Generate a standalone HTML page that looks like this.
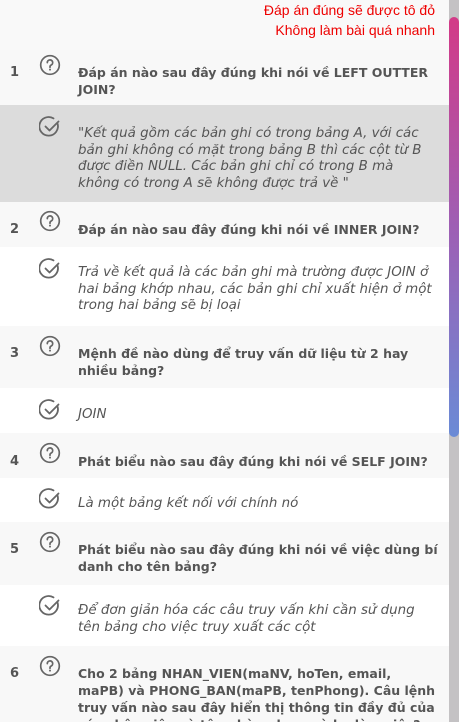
<!DOCTYPE html>
<html style="overflow:hidden"><head><meta charset="utf-8"><style>
*{margin:0;padding:0;box-sizing:border-box}
html,body{width:459px;height:722px;overflow:hidden}
body{background:#f9f9f9;font-family:"DejaVu Sans","Liberation Sans",sans-serif;color:#555;position:relative}
.r{position:absolute;left:0;width:449px}
.q{background:#f8f8f8}
.a{background:#fff}
.t{position:absolute;left:78px;width:362px;font-size:13px;line-height:17px}
.qt{font-weight:bold;font-size:12.5px}
.at{font-style:italic;color:#555;font-size:13.4px;line-height:16.5px;width:355px}
.n{position:absolute;left:10px;font-size:13px;font-weight:bold;line-height:17px}
svg{position:absolute;left:39px}
.red{position:absolute;right:24px;color:#e00;font-size:14px;text-align:right;line-height:20px;font-family:"Liberation Sans",sans-serif}
.sb{position:absolute;left:449px;top:0;width:10px;height:722px;background:#c4c2c4}
.th{position:absolute;left:449px;top:17px;width:10px;height:420px;border-radius:5px;background:linear-gradient(#d33a87,#9e5fb4 50%,#6a8bd6)}
</style></head><body>
<div class="red" style="top:0">Đáp án đúng sẽ được tô đỏ</div>
<div class="red" style="top:20px">Không làm bài quá nhanh</div>

<div class="r q" style="top:50px;height:55px"></div>
<div class="r" style="top:105px;height:97px;background:#dcdcdc"></div>
<div class="r q" style="top:202px;height:45px"></div>
<div class="r a" style="top:247px;height:79px"></div>
<div class="r q" style="top:326px;height:62px"></div>
<div class="r a" style="top:388px;height:45px"></div>
<div class="r q" style="top:433px;height:45px"></div>
<div class="r a" style="top:478px;height:44px"></div>
<div class="r q" style="top:522px;height:63px"></div>
<div class="r a" style="top:585px;height:61px"></div>
<div class="r q" style="top:646px;height:76px"></div>

<svg width="0" height="0" style="position:absolute"><defs>
<g id="qi"><circle cx="11" cy="11" r="9.3" fill="none" stroke="#666" stroke-width="1.7"/><path d="M8.3 8.6a2.7 2.7 0 1 1 3.9 2.4c-.8.4-1.2 1-1.2 1.8v.6" fill="none" stroke="#666" stroke-width="1.7" stroke-linecap="round"/><circle cx="11" cy="15.6" r="1" fill="#666"/></g>
<g id="ci"><path d="M18.5 7.5A9.3 9.3 0 1 1 14.5 2.4" fill="none" stroke="#666" stroke-width="1.8" stroke-linecap="round"/><path d="M6.5 10.5l4 4 9-9" fill="none" stroke="#666" stroke-width="1.8" stroke-linecap="round" stroke-linejoin="round"/></g>
</defs></svg>

<div class="n" style="top:64px">1</div><svg width="22" height="22" style="top:54px"><use href="#qi"/></svg>
<div class="t qt" style="top:64px">Đáp án nào sau đây đúng khi nói về LEFT OUTTER JOIN?</div>
<svg width="22" height="22" style="top:116px"><use href="#ci"/></svg>
<div class="t at" style="top:126px">"Kết quả gồm các bản ghi có trong bảng A, với các bản ghi không có mặt trong bảng B thì các cột từ B được điền NULL. Các bản ghi chỉ có trong B mà không có trong A sẽ không được trả về "</div>

<div class="n" style="top:221px">2</div><svg width="22" height="22" style="top:210px"><use href="#qi"/></svg>
<div class="t qt" style="top:221px">Đáp án nào sau đây đúng khi nói về INNER JOIN?</div>
<svg width="22" height="22" style="top:258px"><use href="#ci"/></svg>
<div class="t at" style="top:265px">Trả về kết quả là các bản ghi mà trường được JOIN ở hai bảng khớp nhau, các bản ghi chỉ xuất hiện ở một trong hai bảng sẽ bị loại</div>

<div class="n" style="top:345px">3</div><svg width="22" height="22" style="top:335px"><use href="#qi"/></svg>
<div class="t qt" style="top:345px">Mệnh đề nào dùng để truy vấn dữ liệu từ 2 hay nhiều bảng?</div>
<svg width="22" height="22" style="top:399px"><use href="#ci"/></svg>
<div class="t at" style="top:407px">JOIN</div>

<div class="n" style="top:453px">4</div><svg width="22" height="22" style="top:442px"><use href="#qi"/></svg>
<div class="t qt" style="top:453px">Phát biểu nào sau đây đúng khi nói về SELF JOIN?</div>
<svg width="22" height="22" style="top:488px"><use href="#ci"/></svg>
<div class="t at" style="top:496px">Là một bảng kết nối với chính nó</div>

<div class="n" style="top:541px">5</div><svg width="22" height="22" style="top:531px"><use href="#qi"/></svg>
<div class="t qt" style="top:541px">Phát biểu nào sau đây đúng khi nói về việc dùng bí danh cho tên bảng?</div>
<svg width="22" height="22" style="top:595px"><use href="#ci"/></svg>
<div class="t at" style="top:603px">Để đơn giản hóa các câu truy vấn khi cần sử dụng tên bảng cho việc truy xuất các cột</div>

<div class="n" style="top:665px">6</div><svg width="22" height="22" style="top:655px"><use href="#qi"/></svg>
<div class="t qt" style="top:665px">Cho 2 bảng NHAN_VIEN(maNV, hoTen, email, maPB) và PHONG_BAN(maPB, tenPhong). Câu lệnh truy vấn nào sau đây hiển thị thông tin đầy đủ của các nhân viên và tên phòng ban mà họ làm việc?</div>

<div class="sb"></div><div class="th"></div>
</body></html>
